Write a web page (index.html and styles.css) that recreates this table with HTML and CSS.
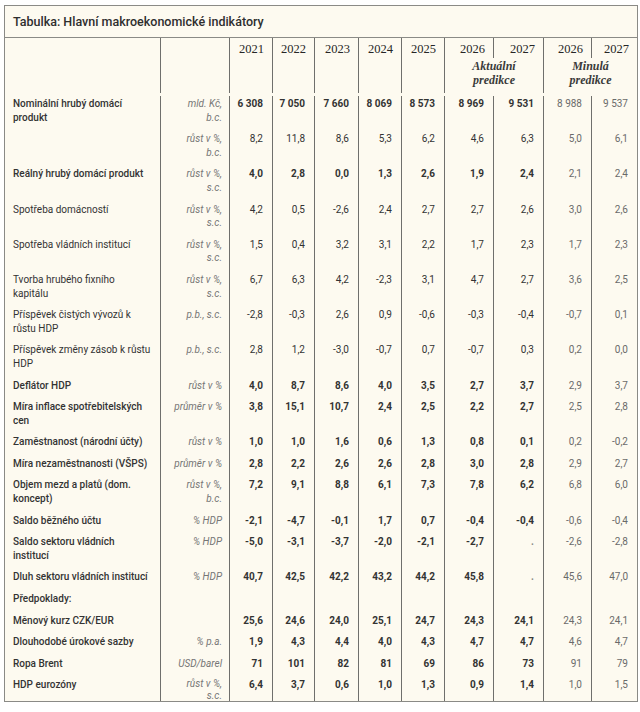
FILE: index.html
```html
<!DOCTYPE html>
<html lang="cs">
<head>
<meta charset="utf-8">
<title>Tabulka</title>
<link rel="stylesheet" href="styles.css">
</head>
<body>
<div class="box">
  <div class="title">Tabulka: Hlavní makroekonomické indikátory</div>
  <table class="tbl">
    <colgroup>
      <col class="w155"><col class="w69"><col class="w43"><col class="w42"><col class="w44"><col class="w43"><col class="w43"><col class="w49"><col class="w50"><col class="w48"><col class="w46">
    </colgroup>
    <thead>
      <tr>
        <th rowspan="2" class="lab"></th>
        <th rowspan="2"></th>
        <th rowspan="2" class="yr">2021</th>
        <th rowspan="2" class="yr">2022</th>
        <th rowspan="2" class="yr">2023</th>
        <th rowspan="2" class="yr">2024</th>
        <th rowspan="2" class="yr">2025</th>
        <th class="yr">2026</th>
        <th class="yr">2027</th>
        <th class="yr">2026</th>
        <th class="yr">2027</th>
      </tr>
      <tr>
        <th colspan="2" class="pred">Aktuální<br>predikce</th>
        <th colspan="2" class="pred">Minulá<br>predikce</th>
      </tr>
    </thead>
    <tbody>
      <tr class="gap"><td colspan="11"></td></tr>
      <tr class="b first"><td class="lab">Nominální hrubý domácí produkt</td><td class="unit">mld. Kč,<br>b.c.</td><td>6 308</td><td>7 050</td><td>7 660</td><td>8 069</td><td>8 573</td><td>8 969</td><td>9 531</td><td class="old">8 988</td><td class="old">9 537</td></tr>
      <tr><td class="lab"></td><td class="unit">růst v %,<br>b.c.</td><td>8,2</td><td>11,8</td><td>8,6</td><td>5,3</td><td>6,2</td><td>4,6</td><td>6,3</td><td class="old">5,0</td><td class="old">6,1</td></tr>
      <tr class="b"><td class="lab">Reálný hrubý domácí produkt</td><td class="unit">růst v %,<br>s.c.</td><td>4,0</td><td>2,8</td><td>0,0</td><td>1,3</td><td>2,6</td><td>1,9</td><td>2,4</td><td class="old">2,1</td><td class="old">2,4</td></tr>
      <tr><td class="lab">Spotřeba domácností</td><td class="unit">růst v %,<br>s.c.</td><td>4,2</td><td>0,5</td><td>-2,6</td><td>2,4</td><td>2,7</td><td>2,7</td><td>2,6</td><td class="old">3,0</td><td class="old">2,6</td></tr>
      <tr><td class="lab">Spotřeba vládních institucí</td><td class="unit">růst v %,<br>s.c.</td><td>1,5</td><td>0,4</td><td>3,2</td><td>3,1</td><td>2,2</td><td>1,7</td><td>2,3</td><td class="old">1,7</td><td class="old">2,3</td></tr>
      <tr><td class="lab">Tvorba hrubého fixního kapitálu</td><td class="unit">růst v %,<br>s.c.</td><td>6,7</td><td>6,3</td><td>4,2</td><td>-2,3</td><td>3,1</td><td>4,7</td><td>2,7</td><td class="old">3,6</td><td class="old">2,5</td></tr>
      <tr><td class="lab">Příspěvek čistých vývozů k růstu HDP</td><td class="unit">p.b., s.c.</td><td>-2,8</td><td>-0,3</td><td>2,6</td><td>0,9</td><td>-0,6</td><td>-0,3</td><td>-0,4</td><td class="old">-0,7</td><td class="old">0,1</td></tr>
      <tr><td class="lab">Příspěvek změny zásob k růstu HDP</td><td class="unit">p.b., s.c.</td><td>2,8</td><td>1,2</td><td>-3,0</td><td>-0,7</td><td>0,7</td><td>-0,7</td><td>0,3</td><td class="old">0,2</td><td class="old">0,0</td></tr>
      <tr class="b"><td class="lab">Deflátor HDP</td><td class="unit">růst v %</td><td>4,0</td><td>8,7</td><td>8,6</td><td>4,0</td><td>3,5</td><td>2,7</td><td>3,7</td><td class="old">2,9</td><td class="old">3,7</td></tr>
      <tr class="b"><td class="lab">Míra inflace spotřebitelských cen</td><td class="unit">průměr v %</td><td>3,8</td><td>15,1</td><td>10,7</td><td>2,4</td><td>2,5</td><td>2,2</td><td>2,7</td><td class="old">2,5</td><td class="old">2,8</td></tr>
      <tr class="b"><td class="lab">Zaměstnanost (národní účty)</td><td class="unit">růst v %</td><td>1,0</td><td>1,0</td><td>1,6</td><td>0,6</td><td>1,3</td><td>0,8</td><td>0,1</td><td class="old">0,2</td><td class="old">-0,2</td></tr>
      <tr class="b"><td class="lab">Míra nezaměstnanosti (VŠPS)</td><td class="unit">průměr v %</td><td>2,8</td><td>2,2</td><td>2,6</td><td>2,6</td><td>2,8</td><td>3,0</td><td>2,8</td><td class="old">2,9</td><td class="old">2,7</td></tr>
      <tr class="b"><td class="lab">Objem mezd a platů (dom. koncept)</td><td class="unit">růst v %,<br>b.c.</td><td>7,2</td><td>9,1</td><td>8,8</td><td>6,1</td><td>7,3</td><td>7,8</td><td>6,2</td><td class="old">6,8</td><td class="old">6,0</td></tr>
      <tr class="b"><td class="lab">Saldo běžného účtu</td><td class="unit">% HDP</td><td>-2,1</td><td>-4,7</td><td>-0,1</td><td>1,7</td><td>0,7</td><td>-0,4</td><td>-0,4</td><td class="old">-0,6</td><td class="old">-0,4</td></tr>
      <tr class="b"><td class="lab">Saldo sektoru vládních institucí</td><td class="unit">% HDP</td><td>-5,0</td><td>-3,1</td><td>-3,7</td><td>-2,0</td><td>-2,1</td><td>-2,7</td><td class="dot">.</td><td class="old">-2,6</td><td class="old">-2,8</td></tr>
      <tr class="b"><td class="lab">Dluh sektoru vládních institucí</td><td class="unit">% HDP</td><td>40,7</td><td>42,5</td><td>42,2</td><td>43,2</td><td>44,2</td><td>45,8</td><td class="dot">.</td><td class="old">45,6</td><td class="old">47,0</td></tr>
      <tr class="b"><td class="lab">Předpoklady:</td><td class="unit"></td><td></td><td></td><td></td><td></td><td></td><td></td><td></td><td class="old"></td><td class="old"></td></tr>
      <tr class="b"><td class="lab">Měnový kurz CZK/EUR</td><td class="unit"></td><td>25,6</td><td>24,6</td><td>24,0</td><td>25,1</td><td>24,7</td><td>24,3</td><td>24,1</td><td class="old">24,3</td><td class="old">24,1</td></tr>
      <tr class="b"><td class="lab">Dlouhodobé úrokové sazby</td><td class="unit">% p.a.</td><td>1,9</td><td>4,3</td><td>4,4</td><td>4,0</td><td>4,3</td><td>4,7</td><td>4,7</td><td class="old">4,6</td><td class="old">4,7</td></tr>
      <tr class="b"><td class="lab">Ropa Brent</td><td class="unit">USD/barel</td><td>71</td><td>101</td><td>82</td><td>81</td><td>69</td><td>86</td><td>73</td><td class="old">91</td><td class="old">79</td></tr>
      <tr class="b last"><td class="lab">HDP eurozóny</td><td class="unit">růst v %,<br>s.c.</td><td>6,4</td><td>3,7</td><td>0,6</td><td>1,0</td><td>1,3</td><td>0,9</td><td>1,4</td><td class="old">1,0</td><td class="old">1,5</td></tr>
    </tbody>
  </table>
</div>
</body>
</html>
```

FILE: styles.css
```css
html, body {
  margin: 0;
  padding: 0;
  background: #ffffff;
}

.box {
  margin: 5px 0 0 4px;
  width: 632px;
  border: 1px solid #8a8a86;
  background: #fdfaf0;
  font-family: Roboto, "Liberation Sans", sans-serif;
  color: #333333;
}

.title {
  font-size: 12.5px;
  font-weight: 500;
  line-height: 15px;
  padding: 8px 8px 8px 8px;
  border-bottom: 1px solid #8a8a86;
  color: #2e2e2e;
}

.tbl {
  width: 632px;
  table-layout: fixed;
  border-collapse: separate;
  border-spacing: 0;
  font-size: 10px;
  line-height: 13.6px;
}

.w155 { width: 155px; }
.w69 { width: 69px; }
.w43 { width: 43px; }
.w42 { width: 42px; }
.w44 { width: 44px; }
.w49 { width: 49px; }
.w50 { width: 50px; }
.w48 { width: 48px; }
.w46 { width: 46px; }

.tbl th,
.tbl td {
  border-left: 1px solid #6f6f6c;
  vertical-align: top;
  text-align: right;
  padding: 4px 9px 4px 4px;
  font-weight: 400;
}

.tbl .lab {
  border-left: none;
  text-align: left;
  padding-left: 8px;
  padding-right: 8px;
}

.tbl th {
  font-family: "Liberation Serif", "DejaVu Serif", serif;
  font-size: 12.5px;
  line-height: 14px;
  color: #262626;
  padding-top: 4px;
  padding-bottom: 2px;
}

.tbl th.yr {
  padding-right: 8px;
}

.tbl th.pred {
  text-align: center;
  font-style: italic;
  font-weight: 700;
  font-size: 12px;
  line-height: 14px;
  padding: 1px 4px 6px 4px;
  color: #3a3a3a;
}

.tbl .gap td {
  border: none;
  padding: 0;
  height: 3px;
  line-height: 0;
  font-size: 0;
}

.tbl tr.first td {
  padding-top: 1px;
}

.tbl td.unit {
  font-style: italic;
  color: #767676;
  padding-right: 7px;
}

.tbl tr.b td {
  font-weight: 700;
}

.tbl tr.b td.lab {
  font-weight: 500;
}

.tbl tr.b td.unit,
.tbl tr.b td.old {
  font-weight: 400;
}

.tbl td.old {
  color: #6a6a6a;
}

.tbl td.dot {
  color: #888888;
}

.tbl tr.last td {
  padding-bottom: 0;
}

.tbl tr.last td.unit {
  line-height: 11.5px;
}
```
